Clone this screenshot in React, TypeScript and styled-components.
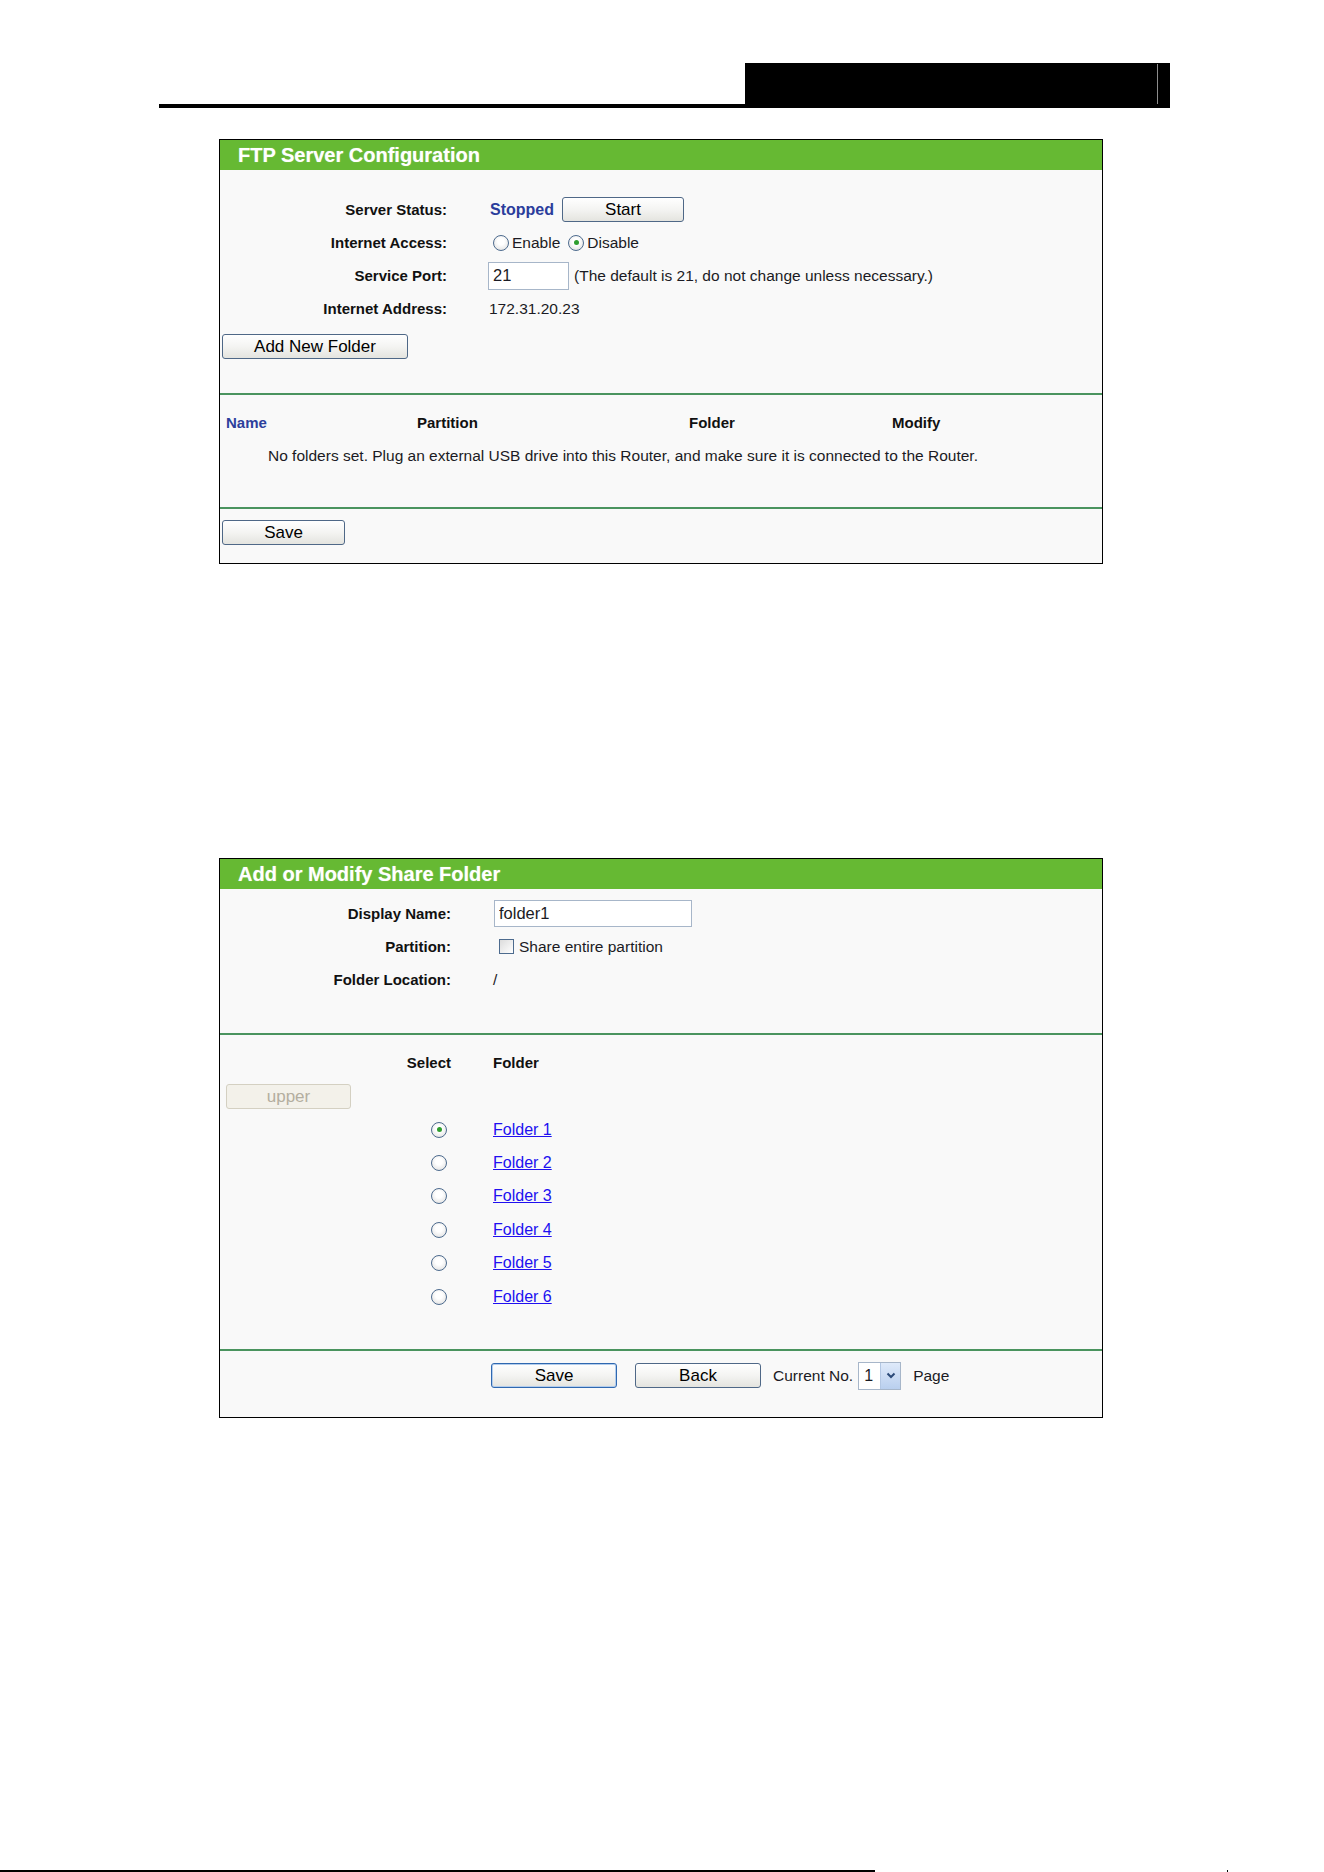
import React from "react";
import styled, { createGlobalStyle, css } from "styled-components";

const GlobalStyle = createGlobalStyle`
  html, body {
    margin: 0;
    padding: 0;
    background: #ffffff;
  }
  body {
    font-family: "Liberation Sans", Arial, sans-serif;
    font-size: 15.5px;
    color: #1b1b24;
  }
  * {
    box-sizing: border-box;
  }
`;

const Page = styled.div`
  width: 1324px;
  height: 1872px;
  display: flex;
  flex-direction: column;
  overflow: hidden;
`;

const PageHeader = styled.header`
  width: 1011px;
  margin: 63px 0 0 159px;
  display: flex;
  justify-content: flex-end;
  border-bottom: 4px solid #000;
`;

const HeaderTab = styled.div`
  width: 425px;
  height: 41px;
  padding: 1px 12px 0 0;
  background: #000;
  display: flex;
  justify-content: flex-end;
`;

const TabRule = styled.span`
  width: 1px;
  height: 40px;
  background: #8c8c8c;
`;

const Panel = styled.section<{ $top: number }>`
  width: 884px;
  margin: ${(p) => p.$top}px 0 0 219px;
  border: 1px solid #000;
  background: #f9f9f9;
`;

const PanelTitle = styled.h2`
  margin: 0;
  height: 30px;
  padding-left: 18px;
  background: #66b933;
  color: #fff;
  font-size: 20px;
  font-weight: bold;
  line-height: 30px;
  text-shadow: 0 0 1px rgba(255, 255, 255, 0.5);
`;

const Section = styled.div<{ $pad: string }>`
  padding: ${(p) => p.$pad};
  & + & {
    border-top: 2px solid #4a945f;
  }
`;

const FormRow = styled.div<{ $label: number; $h?: number }>`
  display: grid;
  grid-template-columns: ${(p) => p.$label}px 1fr;
  column-gap: 42px;
  align-items: center;
  height: ${(p) => p.$h ?? 33}px;
`;

const Label = styled.div`
  text-align: right;
  font-size: 15px;
  font-weight: bold;
  color: #111;
`;

const ColumnTitle = styled(Label)`
  text-align: left;
`;

const Value = styled.div<{ $gap?: number }>`
  display: flex;
  align-items: center;
  gap: ${(p) => p.$gap ?? 0}px;
  white-space: nowrap;
`;

const Status = styled.span`
  margin-left: 1px;
  font-size: 16px;
  font-weight: bold;
  color: #2b3d9c;
`;

const Button = styled.button<{ $w: number; $primary?: boolean }>`
  width: ${(p) => p.$w}px;
  height: 25px;
  padding: 0;
  font: 17px "Liberation Sans", Arial, sans-serif;
  color: #000;
  border: 1px solid #4f6887;
  border-radius: 3px;
  background: linear-gradient(#ffffff, #f4f4f2 50%, #e4e4df);
  flex: none;
  ${(p) =>
    p.$primary &&
    css`
      border-color: #2f68b0;
      box-shadow: inset 0 0 0 1px #b3cdec;
    `}
  &:disabled {
    color: #b3ae9f;
    border-color: #d4d0c2;
    background: #f3f1ea;
  }
`;

const ButtonRow = styled.div<{ $indent: number; $space?: string }>`
  display: flex;
  align-items: center;
  padding-left: ${(p) => p.$indent}px;
  margin: ${(p) => p.$space ?? "0"};
`;

const Radio = styled.span<{ $checked?: boolean }>`
  width: 16px;
  height: 16px;
  border-radius: 50%;
  border: 1px solid #4d6b8e;
  background: radial-gradient(circle at 50% 40%, #ffffff 30%, #dadada);
  display: inline-flex;
  align-items: center;
  justify-content: center;
  flex: none;
  &::after {
    content: "";
    width: 5px;
    height: 5px;
    border-radius: 50%;
    background: ${(p) => (p.$checked ? "#2f9e2f" : "transparent")};
  }
`;

const Option = styled.label`
  display: inline-flex;
  align-items: center;
  gap: 3px;
  margin-left: 4px;
`;

const SelectCell = styled.div`
  display: flex;
  justify-content: flex-end;
  padding-right: 4px;
`;

const Checkbox = styled.span`
  width: 15px;
  height: 15px;
  margin: 0 5px 0 6px;
  border: 1px solid #4d6b8e;
  background: linear-gradient(135deg, #dcdcdc, #ffffff);
  flex: none;
`;

const TextInput = styled.input<{ $w: number; $h: number; $shift: number }>`
  width: ${(p) => p.$w}px;
  height: ${(p) => p.$h}px;
  margin-left: ${(p) => p.$shift}px;
  padding: 0 0 0 4px;
  border: 1px solid #a7b6c9;
  background: #fff;
  font: 16.5px "Liberation Sans", Arial, sans-serif;
  color: #1b1b24;
  outline: none;
`;

const Hint = styled.span`
  margin-left: 5px;
`;

const ListHead = styled.div`
  display: grid;
  grid-template-columns: 191px 272px 203px 1fr;
  align-items: center;
  height: 33px;
  padding-left: 6px;
  font-size: 15px;
  font-weight: bold;
`;

const HeadCell = styled.span<{ $accent?: boolean }>`
  color: ${(p) => (p.$accent ? "#2d3f9c" : "#111")};
`;

const EmptyNote = styled.div`
  height: 33px;
  line-height: 33px;
  padding-left: 48px;
`;

const FolderLink = styled.a`
  font-size: 16px;
  color: #2010f0;
  text-decoration: underline;
`;

const Toolbar = styled.div`
  display: flex;
  align-items: center;
  height: 28px;
  padding-left: 271px;
  gap: 12px;
`;

const Group = styled.div<{ $gap: number }>`
  display: flex;
  align-items: center;
  gap: ${(p) => p.$gap}px;
`;

const SelectBox = styled.div`
  width: 43px;
  height: 28px;
  border: 1px solid #a7b6c9;
  background: #fff;
  display: flex;
  align-items: stretch;
`;

const SelectValue = styled.span`
  flex: 1;
  padding-left: 5px;
  font-size: 16px;
  line-height: 26px;
`;

const SelectArrow = styled.span`
  width: 20px;
  display: flex;
  align-items: center;
  justify-content: center;
  background: linear-gradient(#dfeafa, #b9cfee);
  border-left: 1px solid #b3c7e3;
`;

const Footer = styled.footer`
  margin-top: auto;
  display: flex;
  align-items: flex-end;
  height: 2px;
`;

const FooterRule = styled.span`
  width: 875px;
  height: 2px;
  background: #000;
`;

const FooterTick = styled.span`
  width: 1px;
  height: 2px;
  margin-left: 352px;
  background: #000;
`;

const folders = ["Folder 1", "Folder 2", "Folder 3", "Folder 4", "Folder 5", "Folder 6"];

const App: React.FC = () => {
  return (
    <Page>
      <GlobalStyle />
      <PageHeader>
        <HeaderTab>
          <TabRule />
        </HeaderTab>
      </PageHeader>

      <Panel $top={31}>
        <PanelTitle>FTP Server Configuration</PanelTitle>
        <Section $pad="23px 0 34px">
          <FormRow $label={227}>
            <Label>Server Status:</Label>
            <Value $gap={8}>
              <Status>Stopped</Status>
              <Button $w={122}>Start</Button>
            </Value>
          </FormRow>
          <FormRow $label={227}>
            <Label>Internet Access:</Label>
            <Value $gap={4}>
              <Option>
                <Radio />
                Enable
              </Option>
              <Option>
                <Radio $checked />
                Disable
              </Option>
            </Value>
          </FormRow>
          <FormRow $label={227}>
            <Label>Service Port:</Label>
            <Value>
              <TextInput $w={81} $h={28} $shift={-1} value="21" readOnly />
              <Hint>(The default is 21, do not change unless necessary.)</Hint>
            </Value>
          </FormRow>
          <FormRow $label={227}>
            <Label>Internet Address:</Label>
            <Value>172.31.20.23</Value>
          </FormRow>
          <ButtonRow $indent={2} $space="9px 0 0">
            <Button $w={186}>Add New Folder</Button>
          </ButtonRow>
        </Section>
        <Section $pad="11px 0 35px">
          <ListHead>
            <HeadCell $accent>Name</HeadCell>
            <HeadCell>Partition</HeadCell>
            <HeadCell>Folder</HeadCell>
            <HeadCell>Modify</HeadCell>
          </ListHead>
          <EmptyNote>
            No folders set. Plug an external USB drive into this Router, and make sure it is connected
            to the Router.
          </EmptyNote>
        </Section>
        <Section $pad="11px 0 18px">
          <ButtonRow $indent={2}>
            <Button $w={123}>Save</Button>
          </ButtonRow>
        </Section>
      </Panel>

      <Panel $top={294}>
        <PanelTitle>Add or Modify Share Folder</PanelTitle>
        <Section $pad="8px 0 37px">
          <FormRow $label={231}>
            <Label>Display Name:</Label>
            <Value>
              <TextInput $w={198} $h={27} $shift={1} value="folder1" readOnly />
            </Value>
          </FormRow>
          <FormRow $label={231}>
            <Label>Partition:</Label>
            <Value>
              <Checkbox />
              Share entire partition
            </Value>
          </FormRow>
          <FormRow $label={231}>
            <Label>Folder Location:</Label>
            <Value>/</Value>
          </FormRow>
        </Section>
        <Section $pad="11px 0 35.5px">
          <FormRow $label={231}>
            <Label>Select</Label>
            <ColumnTitle>Folder</ColumnTitle>
          </FormRow>
          <ButtonRow $indent={6} $space="5px 0 4px">
            <Button $w={125} disabled>
              upper
            </Button>
          </ButtonRow>
          {folders.map((name, index) => (
            <FormRow $label={231} $h={33.4} key={name}>
              <SelectCell>
                <Radio $checked={index === 0} />
              </SelectCell>
              <Value>
                <FolderLink href="#">{name}</FolderLink>
              </Value>
            </FormRow>
          ))}
        </Section>
        <Section $pad="11px 0 27px">
          <Toolbar>
            <Group $gap={18}>
              <Button $w={126} $primary>
                Save
              </Button>
              <Button $w={126}>Back</Button>
            </Group>
            <Group $gap={5}>
              <span>Current No.</span>
              <SelectBox>
                <SelectValue>1</SelectValue>
                <SelectArrow>
                  <svg width="10" height="7" viewBox="0 0 10 7">
                    <polyline points="1.5,1.5 5,5 8.5,1.5" fill="none" stroke="#2c4a78" strokeWidth="2" />
                  </svg>
                </SelectArrow>
              </SelectBox>
            </Group>
            <span>Page</span>
          </Toolbar>
        </Section>
      </Panel>

      <Footer>
        <FooterRule />
        <FooterTick />
      </Footer>
    </Page>
  );
};

export default App;
